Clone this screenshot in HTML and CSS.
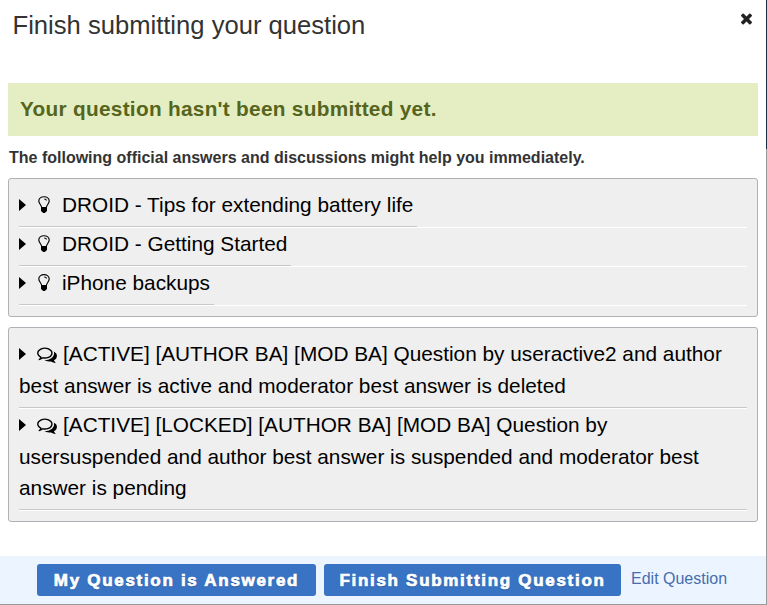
FILE: index.html
```html
<!DOCTYPE html>
<html lang="en">
<head>
<meta charset="utf-8">
<title>Finish submitting your question</title>
<link rel="stylesheet" href="styles.css">
</head>
<body>
<svg width="0" height="0" class="defs">
<symbol id="bulb" viewBox="0 0 12 17"><path d="M3.6 11.2C3.4 9 .8 7.7.8 5.1.8 2.5 3.1.7 6 .7s5.200 1.800 5.200 4.400c0 2.600-2.600 3.900-2.800 6.100M6.200 3c1.200 0 2.200.6 2.300 1.500" fill="none" stroke="#000" stroke-width="1.150"/><path d="M3 10.900h6v4.200L7.600 16.200 6.800 17H5.200l-.8-.8L3 15.100z"/></symbol>
<symbol id="chat" viewBox="0 0 1792 1536"><path transform="matrix(1 0 0 -1 0 1408)" d="M704 1152q-153 0 -286 -52t-211.5 -141t-78.5 -191q0 -82 53 -158t149 -132l97 -56l-35 -84q34 20 62 39l44 31l53 -10q78 -14 153 -14q153 0 286 52t211.5 141t78.5 191t-78.5 191t-211.5 141t-286 52zM704 1280q191 0 353.5 -68.5t256.5 -186.5t94 -257t-94 -257t-256.5 -186.5t-353.5 -68.5q-86 0 -176 16q-124 -88 -278 -128q-36 -9 -86 -16h-3q-11 0 -20.5 8t-11.5 21q-1 3 -1 6.5t0.5 6.5t2 6l2.5 5t3.5 5.5t4 5t4.5 5t4 4.5q5 6 23 25t26 29.5t22.5 29t25 38.5t20.5 44q-124 72 -195 177t-71 224q0 139 94 257t256.5 186.5t353.5 68.5zM1526 111q10 -24 20.5 -44t25 -38.5t22.5 -29t26 -29.5t23 -25q1 -1 4 -4.5t4.5 -5t4 -5t3.5 -5.5l2.5 -5t2 -6t0.5 -6.5t-1 -6.5q-3 -14 -13 -22t-22 -7q-50 7 -86 16q-154 40 -278 128q-90 -16 -176 -16q-271 0 -472 132q58 -4 88 -4q161 0 309 45t264 129q125 92 192 212t67 254q0 77 -23 152q129 -71 204 -178t75 -230q0 -120 -71 -224.5t-195 -176.5z"/></symbol>
</svg>
<main class="dialog">
  <header class="head">
    <h1 class="title">Finish submitting your question</h1>
    <svg class="close" viewBox="110 110 1188 1188" role="img" aria-label="Close"><path transform="matrix(1 0 0 -1 0 1280)" d="M1298 214q0 -40 -28 -68l-136 -136q-28 -28 -68 -28t-68 28l-294 294l-294 -294q-28 -28 -68 -28t-68 28l-136 136q-28 28 -28 68t28 68l294 294l-294 294q-28 28 -28 68t28 68l136 136q28 28 68 28t68 -28l294 -294l294 294q28 28 68 28t68 -28l136 -136q28 -28 28 -68t-28 -68l-294 -294l294 -294q28 -28 28 -68z"/></svg>
  </header>
  <div class="notice"><span>Your question hasn't been submitted yet.</span></div>
  <p class="intro"><span>The following official answers and discussions might help you immediately.</span></p>
  <ul class="panel">
    <li class="row"><a class="entry"><i class="caret"></i><svg class="bulb"><use href="#bulb"/></svg>DROID - Tips for extending battery life</a></li>
    <li class="row"><a class="entry"><i class="caret"></i><svg class="bulb"><use href="#bulb"/></svg>DROID - Getting Started</a></li>
    <li class="row"><a class="entry"><i class="caret"></i><svg class="bulb"><use href="#bulb"/></svg>iPhone backups</a></li>
  </ul>
  <ul class="panel">
    <li class="row two"><a class="entry"><i class="caret"></i><svg class="chat"><use href="#chat"/></svg>[ACTIVE] [AUTHOR BA] [MOD BA] Question by useractive2 and author<br>best answer is active and moderator best answer is deleted</a></li>
    <li class="row three"><a class="entry"><i class="caret"></i><svg class="chat"><use href="#chat"/></svg>[ACTIVE] [LOCKED] [AUTHOR BA] [MOD BA] Question by<br>usersuspended and author best answer is suspended and moderator best<br>answer is pending</a></li>
  </ul>
  <footer class="foot">
    <button class="btn first">My Question is Answered</button>
    <button class="btn second">Finish Submitting Question</button>
    <a class="edit">Edit Question</a>
  </footer>
</main>
<div class="edge"></div>
</body>
</html>
```
FILE: styles.css
```css
* { box-sizing: border-box; }
body { margin: 0; display: flex; width: 767px; height: 605px; overflow: hidden; background: #fff; font-family: "Liberation Sans", Arial, sans-serif; }
.defs { position: absolute; }
.dialog { width: 766px; height: 605px; display: flex; flex-direction: column; border-bottom: 1px solid #999; }
.edge { width: 1px; height: 605px; background: linear-gradient(#1b2c44 149px, #999 149px); }
.head { display: flex; justify-content: space-between; height: 83px; padding: 8px 14px 0 12.5px; }
.title { margin: 0; font-size: 25.6px; line-height: 34px; font-weight: 400; color: #333; }
.close { width: 11px; height: 12px; margin: 5px 0 0; fill: #222; }
.notice { height: 53px; margin: 0 8px; padding-left: 12px; background: #e5eec2; color: #56651d; font-size: 20.8px; line-height: 52px; font-weight: 700; letter-spacing: .28px; }
.intro { height: 42px; margin: 0; padding: 1px 0 0 9px; font-size: 16px; line-height: 42px; font-weight: 700; color: #333; }
.panel { list-style: none; width: 750px; margin: 0 0 10px 8px; padding: 10px; background: #efefef; border: 1px solid #b0b1b6; border-radius: 3px; }
.row { height: 39px; border-bottom: 1px solid #fff; }
.two { height: 71px; }
.three { height: 102px; }
.entry { display: inline-block; vertical-align: top; height: 100%; padding-right: 4px; border-bottom: 1px solid #c8c8c8; color: #000; font-size: 20.8px; line-height: 31.5px; white-space: nowrap; }
.two .entry, .three .entry { width: 100%; }
.caret { display: inline-block; width: 7px; height: 12px; margin-right: 12px; background: #000; clip-path: polygon(0 0, 100% 50%, 0 100%); vertical-align: 1px; }
.bulb { width: 12px; height: 17px; margin-right: 12px; vertical-align: -1px; }
.chat { width: 20px; height: 17px; margin: 0 6px 0 -1px; vertical-align: -2px; }
.foot { display: flex; align-items: flex-start; height: 48px; margin-top: auto; padding: 8px 0 0 37px; background: #ecf5ff; }
.btn { height: 32px; margin: 0 8px 0 0; padding: 1px 0 0; border: 0; border-radius: 3px; background: #3973c4; color: #fff; font: 700 17px/31px "Liberation Sans", Arial, sans-serif; letter-spacing: 1.7px; -webkit-text-stroke: .7px #fff; text-shadow: 0 1px 1px #244f8c; }
.first { width: 279px; }
.second { width: 297px; }
.edit { margin-left: 2px; font-size: 16px; line-height: 29px; color: #466dae; }
```
